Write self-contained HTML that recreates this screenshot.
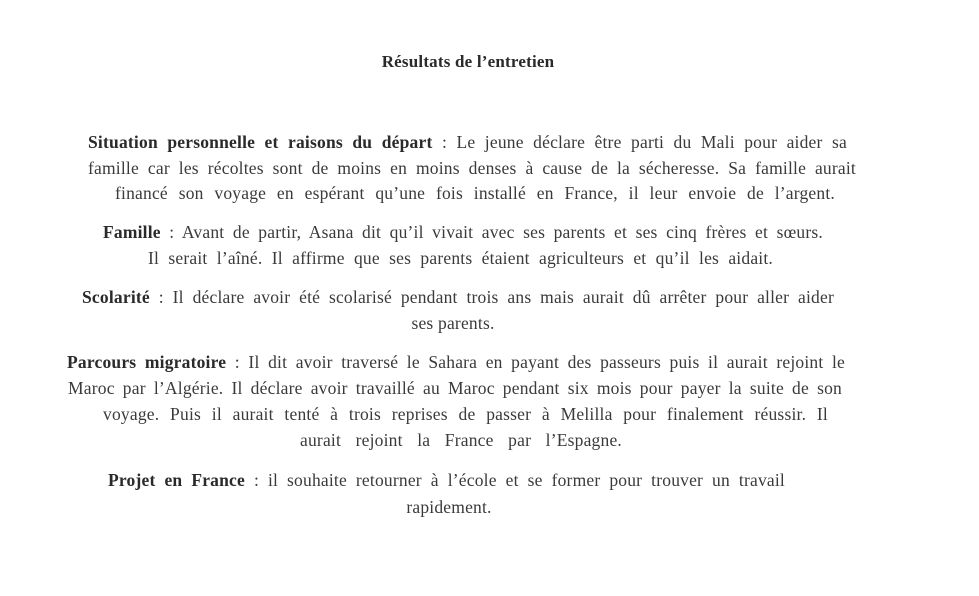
<!DOCTYPE html>
<html><head><meta charset="utf-8"><style>
html,body{margin:0;padding:0;background:#fff;}
body{width:979px;height:596px;position:relative;overflow:hidden;font-family:"Liberation Serif",serif;font-size:17.5px;letter-spacing:0.2px;color:#3a3a3a;}
.l{position:absolute;line-height:20px;height:20px;text-align:justify;text-align-last:justify;}
.c{text-align:center;text-align-last:center;}
b{color:#2a2a2a;}
</style></head><body>
<div class="l c" style="left:300px;top:52px;width:336px;font-size:17px;"><b>Résultats de l’entretien</b></div>

<div class="l" style="left:88px;top:132px;width:759px;"><b>Situation personnelle et raisons du départ</b> : Le jeune déclare être parti du Mali pour aider sa</div>
<div class="l" style="left:88px;top:158px;width:768px;">famille car les récoltes sont de moins en moins denses à cause de la sécheresse. Sa famille aurait</div>
<div class="l" style="left:115px;top:183px;width:720px;">financé son voyage en espérant qu’une fois installé en France, il leur envoie de l’argent.</div>

<div class="l" style="left:103px;top:222px;width:720px;"><b>Famille</b> : Avant de partir, Asana dit qu’il vivait avec ses parents et ses cinq frères et sœurs.</div>
<div class="l" style="left:148px;top:248px;width:625px;">Il serait l’aîné. Il affirme que ses parents étaient agriculteurs et qu’il les aidait.</div>

<div class="l" style="left:82px;top:287px;width:752px;"><b>Scolarité</b> : Il déclare avoir été scolarisé pendant trois ans mais aurait dû arrêter pour aller aider</div>
<div class="l c" style="left:353px;top:313px;width:200px;">ses parents.</div>

<div class="l" style="left:67px;top:352px;width:778px;"><b>Parcours migratoire</b> : Il dit avoir traversé le Sahara en payant des passeurs puis il aurait rejoint le</div>
<div class="l" style="left:68px;top:378px;width:774px;">Maroc par l’Algérie. Il déclare avoir travaillé au Maroc pendant six mois pour payer la suite de son</div>
<div class="l" style="left:103px;top:404px;width:725px;">voyage. Puis il aurait tenté à trois reprises de passer à Melilla pour finalement réussir. Il</div>
<div class="l" style="left:300px;top:430px;width:322px;">aurait rejoint la France par l’Espagne.</div>

<div class="l" style="left:108px;top:470px;width:677px;"><b>Projet en France</b> : il souhaite retourner à l’école et se former pour trouver un travail</div>
<div class="l c" style="left:349px;top:497px;width:200px;">rapidement.</div>
</body></html>
